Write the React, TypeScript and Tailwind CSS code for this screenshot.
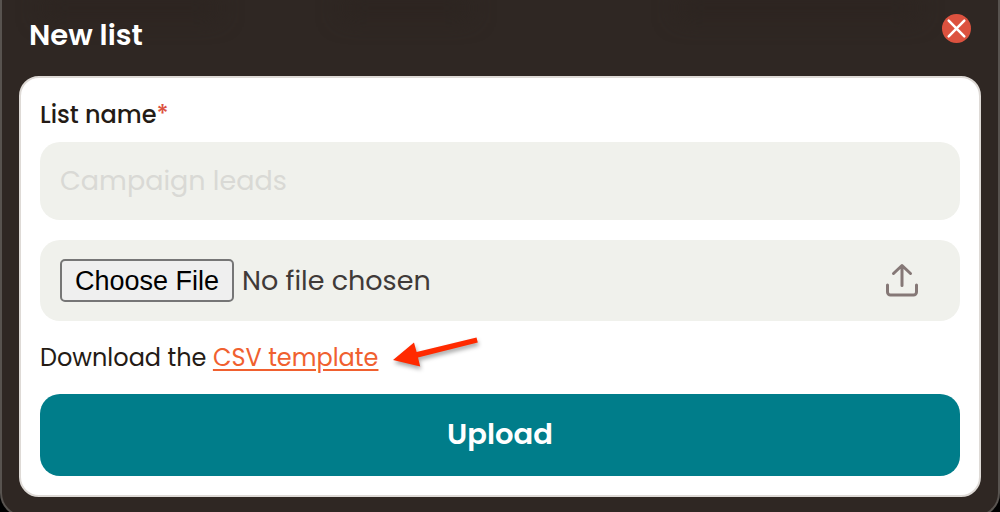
import { useState } from "react";

function CloseIcon() {
  return (
    <svg className="w-[29px] h-[29px]" viewBox="0 0 29 29" fill="none" aria-hidden="true">
      <circle cx="14.5" cy="14.5" r="14.5" fill="#dc523f" />
      <path d="M6.7 6.7 22.300 22.300M22.300 6.700 6.700 22.300" stroke="#fff" strokeWidth="2.500" strokeLinecap="round" />
    </svg>
  );
}

function UploadIcon() {
  return (
    <svg
      className="w-9 h-9 shrink-0 pointer-events-none"
      viewBox="0 0 36 36"
      fill="none"
      stroke="#857876"
      strokeWidth="3"
      strokeLinecap="round"
      strokeLinejoin="round"
      aria-hidden="true"
    >
      <path d="M18 22.500V2.500M9.500 10.500l8.500-8 8.500 8" />
      <path d="M3.500 22v7a3 3 0 0 0 3 3h23a3 3 0 0 0 3-3v-7" />
    </svg>
  );
}

function PointerArrow() {
  return (
    <svg className="absolute left-[350px] -top-2 w-[96px] h-[48px] drop-shadow-[1px_3px_2px_rgba(0,0,0,0.35)]" viewBox="0 0 96 48" aria-hidden="true">
      <path d="M3 27 24 9.5l2.600 9.500L86.500 4.500l1.300 5L28 24.500l2.200 9Z" fill="#ff2a00" />
    </svg>
  );
}

export default function App() {
  const [name, setName] = useState("");

  return (
    <div className="h-screen overflow-hidden bg-black font-['Poppins','Inter',sans-serif] text-[#241b15]">
      <div className="relative px-[17px] pb-[18px] bg-[#2f2723] border-2 border-t-0 border-[#58534f] rounded-b-[24px]">
        <div className="absolute top-0 left-10 w-44 h-4 bg-[#2b231f] blur-md" />
        <div className="absolute top-0 left-[340px] w-32 h-4 bg-[#2b231f] blur-md" />
        <div className="absolute top-0 right-20 w-60 h-4 bg-[#2b231f] blur-md" />

        <header className="relative flex items-start justify-between h-[76px] pt-[14px] px-[10px]">
          <h1 className="text-[29px] leading-[42px] font-semibold text-white">New list</h1>
          <button type="button" aria-label="Close" className="cursor-pointer">
            <CloseIcon />
          </button>
        </header>

        <form
          className="relative px-[19px] pt-5 pb-[19px] bg-white border-2 border-[#dedad6] rounded-[20px]"
          onSubmit={(e) => e.preventDefault()}
        >
          <label htmlFor="list-name" className="block mb-[10px] text-[24px] leading-[34px] font-medium">
            List name<span className="text-[#dc523f]">*</span>
          </label>
          <input
            id="list-name"
            type="text"
            value={name}
            onChange={(e) => setName(e.target.value)}
            placeholder="Campaign leads"
            className="block w-full h-[78px] px-5 rounded-[20px] bg-[#f0f1ec] text-[27px] placeholder:text-[#d9d9d5] outline-none"
          />

          <div className="mt-5 flex items-center h-[81px] pl-5 pr-10 rounded-[20px] bg-[#f0f1ec]">
            <input
              type="file"
              accept=".csv"
              aria-label="CSV file"
              className="flex-1 min-w-0 text-[27px] text-[#403a38] file:h-[43px] file:px-[13px] file:mr-2 file:rounded-[5px] file:border-2 file:border-solid file:border-[#767676] file:bg-[#efefef] file:font-['Liberation_Sans',sans-serif] file:text-[27px] file:text-black"
            />
            <UploadIcon />
          </div>

          <p className="relative my-5 text-[24px] leading-[33px]">
            Download the{" "}
            <a href="#template" className="text-[#f0602f] underline decoration-2 underline-offset-3">
              CSV template
            </a>
            <PointerArrow />
          </p>

          <button
            type="submit"
            className="block w-full h-[82px] rounded-[20px] bg-[#007d8a] text-[29px] font-semibold text-white cursor-pointer"
          >
            Upload
          </button>
        </form>
      </div>
    </div>
  );
}
